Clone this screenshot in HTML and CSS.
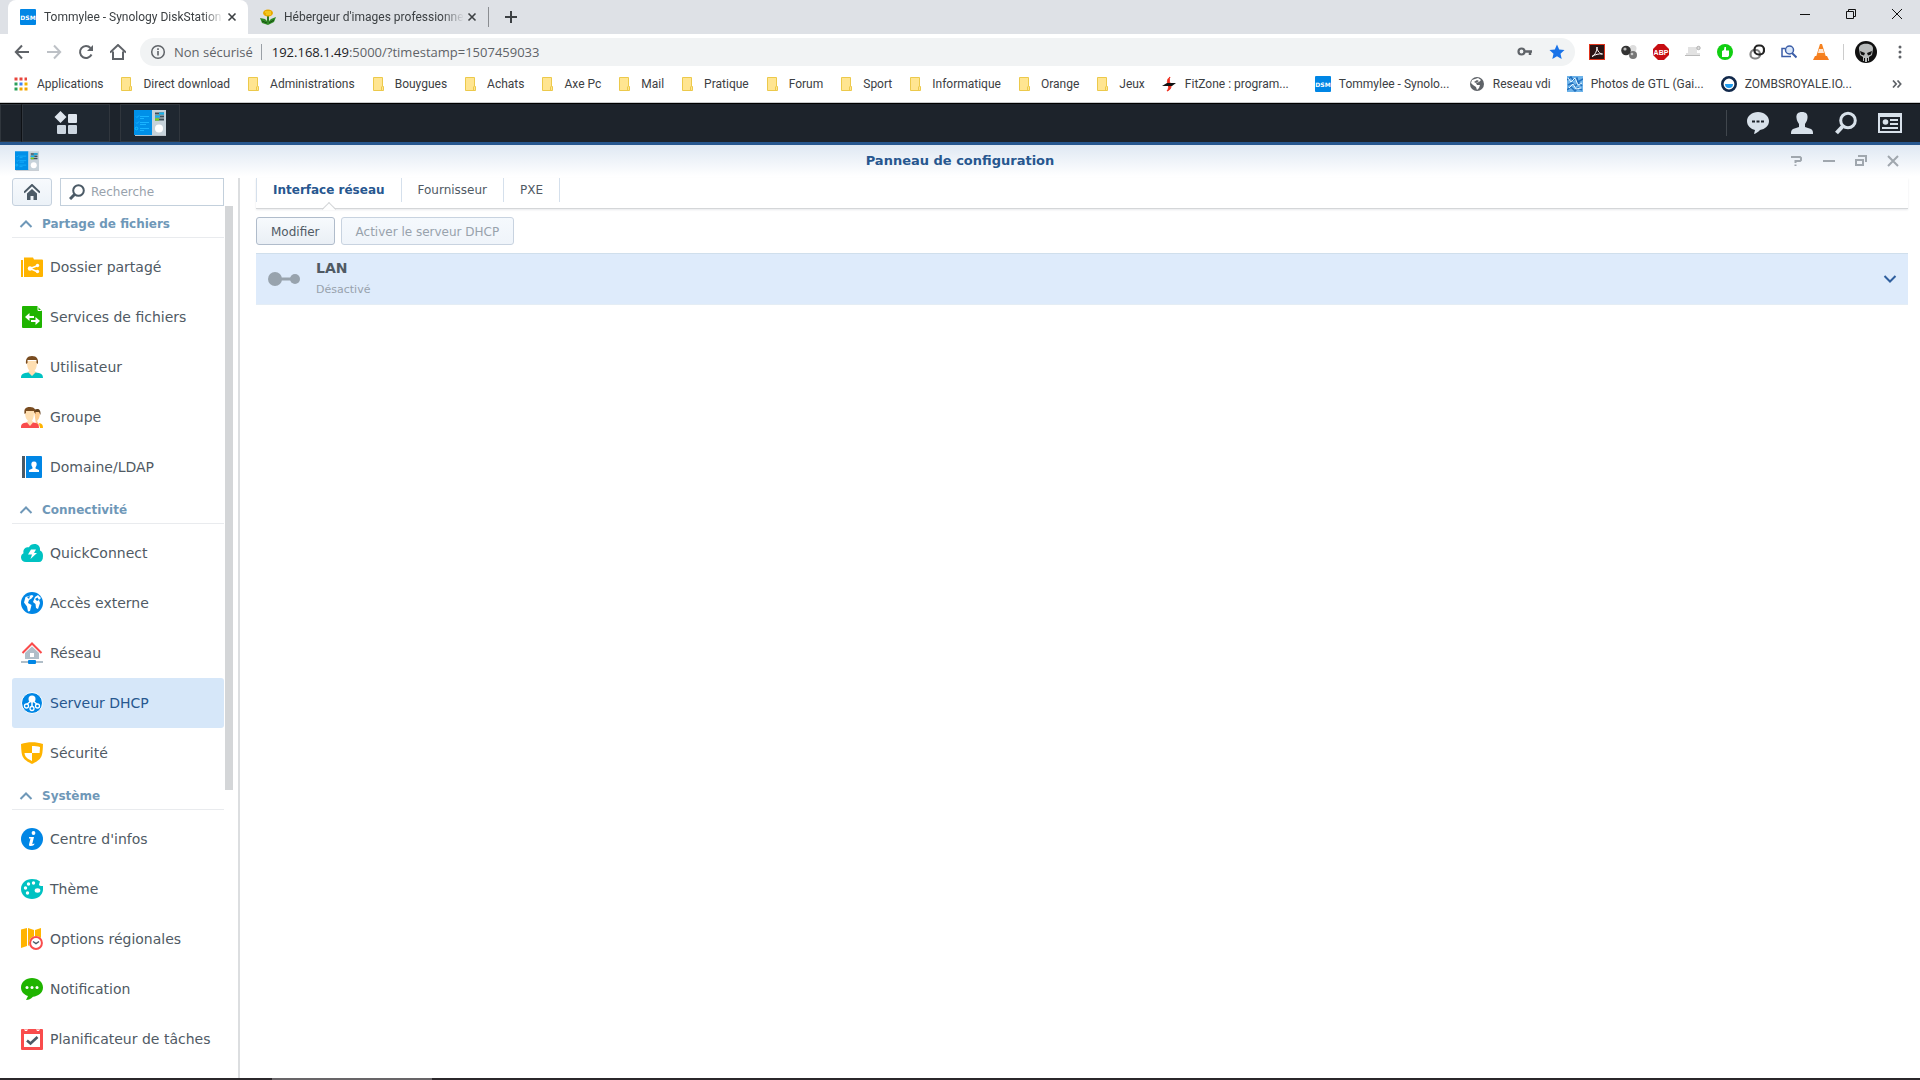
FILE: index.html
```html
<!DOCTYPE html>
<html lang="fr">
<head>
    <meta charset="UTF-8">
    <meta name="viewport" content="width=device-width, initial-scale=1.0">
    <title>Tommylee - Synology DiskStation</title>
    <link rel="stylesheet" href="styles.css">
</head>
<body>
    <!-- shared icons -->
    <svg class="defs" width="0" height="0">
        <symbol id="folder" viewBox="0 0 16 16">
            <path d="M2.500 1.500h9v9h1v4h-10z" fill="#ffe591" stroke="#ecc94b"/>
            <path d="M10.500 14v-3.500" stroke="#ecc94b"/>
        </symbol>
        <symbol id="panel" viewBox="0 0 32 26">
            <rect x="1" y="24" width="31" height="2" fill="#b9c0c6"/>
            <rect width="18" height="25" fill="#0090e8"/>
            <rect x="18" width="14" height="25" fill="#c6d2da"/>
            <path d="M2 6.500l1 1 2-2M6 6.500h9M6 8.500h4M2 12.500l1 1 2-2M6 12.500h9M6 14.500h6M6 18.500h9M6 20.500h4" stroke="#19b4ff" fill="none"/>
            <circle cx="2.500" cy="18.500" r="1.300" fill="none" stroke="#19c0ff"/>
            <path d="M21 3.500h9M21 6.500h9M21 9.500h9" stroke="#40505a" stroke-width="2"/>
            <path d="M25 3.500h5M21 6.500h5" stroke="#13b5f0" stroke-width="2"/>
            <path d="M21 9.500h4" stroke="#73d216" stroke-width="2"/>
            <circle cx="25" cy="18.500" r="4" fill="#fff"/>
        </symbol>
        <symbol id="up" viewBox="0 0 14 10">
            <path d="M1.500 8L7 2.500 12.500 8" fill="none" stroke="#6f98b8" stroke-width="2"/>
        </symbol>
    </svg>

    <header class="browser">
        <div class="tab-strip">
            <div class="browser-tab active">
                <svg width="16" height="16" viewBox="0 0 16 16"><rect width="16" height="16" rx="1" fill="#0086e5"/><text x="8" y="10.500" text-anchor="middle" font-family="DejaVu Sans" font-size="6" font-weight="bold" fill="#fff">DSM</text></svg>
                <span class="tab-title">Tommylee - Synology DiskStation</span>
                <button class="tab-close" aria-label="Fermer l'onglet"><svg width="10" height="10" viewBox="0 0 10 10"><path d="M1.500 1.500l7 7M8.500 1.500l-7 7" stroke="#3c4043" stroke-width="1.600"/></svg></button>
            </div>
            <div class="browser-tab">
                <svg width="16" height="16" viewBox="0 0 16 16"><path d="M8 6v8" stroke="#2d7a22" stroke-width="2"/><path d="M0 9l5 1 3 3 3-3 5-2-2 5-6 3-6-2z" fill="#2f8a25"/><path d="M2 12l5 2M14 11l-5 3" stroke="#174d12"/><ellipse cx="8" cy="4" rx="5" ry="3.500" fill="#e8a800"/><path d="M5 3h6M6 5h5" stroke="#ffe23d"/></svg>
                <span class="tab-title">Hébergeur d'images professionne</span>
                <button class="tab-close" aria-label="Fermer l'onglet"><svg width="10" height="10" viewBox="0 0 10 10"><path d="M1.500 1.500l7 7M8.500 1.500l-7 7" stroke="#3c4043" stroke-width="1.600"/></svg></button>
            </div>
            <button class="new-tab" aria-label="Nouvel onglet"><svg width="12" height="12" viewBox="0 0 12 12"><path d="M6 0v12M0 6h12" stroke="#3c4043" stroke-width="2"/></svg></button>
            <div class="os-buttons">
                <button aria-label="Réduire"><svg width="12" height="12" viewBox="0 0 12 12"><path d="M1 6.500h10" stroke="#111"/></svg></button>
                <button aria-label="Restaurer"><svg width="12" height="12" viewBox="0 0 12 12"><path d="M1.500 3.500h7v7h-7zM3.500 3.500v-2h7v7h-2" fill="none" stroke="#111"/></svg></button>
                <button aria-label="Fermer"><svg width="12" height="12" viewBox="0 0 12 12"><path d="M1 1l10 10M11 1L1 11" stroke="#111"/></svg></button>
            </div>
        </div>

        <div class="toolbar">
            <div class="nav-buttons">
                <button aria-label="Précédent"><svg width="16" height="16" viewBox="0 0 16 16"><path d="M15 8H2M8 1.500L1.800 8 8 14.500" fill="none" stroke="#5f6368" stroke-width="2"/></svg></button>
                <button aria-label="Suivant"><svg width="16" height="16" viewBox="0 0 16 16"><path d="M1 8h13M8 1.500L14.200 8 8 14.500" fill="none" stroke="#bdc1c6" stroke-width="2"/></svg></button>
                <button aria-label="Actualiser"><svg width="16" height="16" viewBox="0 0 16 16"><path d="M13.500 10.500A6 6 0 1 1 12.500 4" fill="none" stroke="#5f6368" stroke-width="2"/><path d="M15 1v6H9z" fill="#5f6368"/></svg></button>
                <button aria-label="Accueil"><svg width="16" height="16" viewBox="0 0 16 16"><path d="M0 8.500L8 1l8 7.500M3 7.500V15h10V7.500" fill="none" stroke="#5f6368" stroke-width="2"/></svg></button>
            </div>
            <div class="omnibox">
                <svg width="16" height="16" viewBox="0 0 16 16"><circle cx="8" cy="8" r="6.300" fill="none" stroke="#5f6368" stroke-width="1.500"/><path d="M8 7v4.500M8 4.300v1.600" stroke="#5f6368" stroke-width="1.600"/></svg>
                <span class="insecure">Non sécurisé</span>
                <span class="url"><b>192.168.1.49</b>:5000/?timestamp=1507459033</span>
                <svg class="key" width="16" height="16" viewBox="0 0 16 16"><circle cx="4.500" cy="7.500" r="3" fill="none" stroke="#5f6368" stroke-width="2.200"/><path d="M7 7.500h8M13 8v3" stroke="#5f6368" stroke-width="2.500"/></svg>
                <svg width="16" height="16" viewBox="0 0 16 16"><path d="M8 .5l2.200 5 5.300.5-4 3.700 1.200 5.300L8 12.200 3.300 15l1.200-5.300L.5 6l5.300-.5z" fill="#1a73e8"/></svg>
            </div>
            <div class="extensions">
                <svg width="16" height="16" viewBox="0 0 16 16"><rect x=".5" y=".5" width="15" height="15" fill="#2a1414" stroke="#e0341c"/><path d="M3 12.500c3-1.500 5-5 5-9.500 0 4 3 7 5.500 7-4-.5-7 .5-10.500 2.500z" fill="none" stroke="#fff"/></svg>
                <svg width="16" height="16" viewBox="0 0 16 16"><circle cx="12" cy="4.500" r="3.500" fill="#ddd"/><circle cx="12" cy="11" r="4" fill="#777"/><circle cx="5" cy="6.500" r="4.800" fill="#333"/><circle cx="4" cy="5" r="1.600" fill="#bbb"/><circle cx="11" cy="10" r="1.300" fill="#ccc"/></svg>
                <svg width="16" height="16" viewBox="0 0 16 16"><path d="M5 0h6l5 5v6l-5 5H5l-5-5V5z" fill="#c70d12"/><text x="8" y="10.500" text-anchor="middle" font-family="Liberation Sans" font-size="7" font-weight="bold" fill="#fff">ABP</text></svg>
                <svg width="16" height="16" viewBox="0 0 16 16"><path d="M3 3h9v6h3v3H1V9h2z" fill="#e2e2e2"/><path d="M0 11.500h15" stroke="#bbb"/><circle cx="13.500" cy="4" r="1.700" fill="#ddd" stroke="#b0b0b0"/></svg>
                <svg width="16" height="16" viewBox="0 0 16 16"><circle cx="8" cy="8" r="8" fill="#11cf12"/><path d="M5 7l2-1 .5-3h1.500v3.500h3v5l-1 1.500H5z" fill="#fff"/></svg>
                <svg width="16" height="16" viewBox="0 0 16 16"><rect x="1.500" y="6" width="9.500" height="8.500" rx="4" fill="none" stroke="#858585" stroke-width="2.200"/><rect x="5.500" y="1.500" width="9.500" height="9" rx="4" fill="none" stroke="#222" stroke-width="2.200"/></svg>
                <svg width="16" height="16" viewBox="0 0 16 16"><path d="M4 4.500H1v8h9" fill="none" stroke="#3c5ea8" stroke-width="1.500"/><circle cx="8.500" cy="6" r="4" fill="#dbe8fa" stroke="#3c5ea8" stroke-width="1.500"/><path d="M11 9l4.500 4.500" stroke="#3c5ea8" stroke-width="2"/></svg>
                <svg width="16" height="16" viewBox="0 0 16 16"><path d="M7 0h2l4 13H3z" fill="#f58220"/><path d="M6 5h4l1 4H5z" fill="#fde8d6"/><path d="M2 12h12l2 4H0z" fill="#f57c1d"/></svg>
            </div>
            <svg class="avatar" width="22" height="22" viewBox="0 0 22 22"><circle cx="11" cy="11" r="11" fill="#111"/><path d="M4 8C3 1 19 1 18 8l-1 6-3 2v4h-1v-3h-1v4h-2v-4H9v3H8v-4l-3-2z" fill="#b9bcbc"/><path d="M5 10l5 2-1 2.500-3-1zM17 10l-5 2 1 2.500 3-1z" fill="#111"/></svg>
            <button class="menu" aria-label="Menu"><svg width="4" height="14" viewBox="0 0 4 14"><circle cx="2" cy="2" r="1.500" fill="#5f6368"/><circle cx="2" cy="7" r="1.500" fill="#5f6368"/><circle cx="2" cy="12" r="1.500" fill="#5f6368"/></svg></button>
        </div>

        <nav class="bookmarks">
            <a href="#"><svg width="16" height="16" viewBox="0 0 16 16"><path d="M1.500 3H14" stroke="#e8453c" stroke-width="3" stroke-dasharray="3 2"/><path d="M1.500 8H5" stroke="#2b9e58" stroke-width="3" stroke-dasharray="3 2"/><path d="M6.500 8H10" stroke="#3f83f8" stroke-width="3" stroke-dasharray="3 2"/><path d="M11.500 8H14.500" stroke="#f2b400" stroke-width="3"/><path d="M1.500 13H5" stroke="#2b9e58" stroke-width="3" stroke-dasharray="3 2"/><path d="M6.500 13H14.500" stroke="#f2a600" stroke-width="3" stroke-dasharray="3 2"/></svg>Applications</a>
            <a href="#"><svg width="16" height="16"><use href="#folder"/></svg>Direct download</a>
            <a href="#"><svg width="16" height="16"><use href="#folder"/></svg>Administrations</a>
            <a href="#"><svg width="16" height="16"><use href="#folder"/></svg>Bouygues</a>
            <a href="#"><svg width="16" height="16"><use href="#folder"/></svg>Achats</a>
            <a href="#"><svg width="16" height="16"><use href="#folder"/></svg>Axe Pc</a>
            <a href="#"><svg width="16" height="16"><use href="#folder"/></svg>Mail</a>
            <a href="#"><svg width="16" height="16"><use href="#folder"/></svg>Pratique</a>
            <a href="#"><svg width="16" height="16"><use href="#folder"/></svg>Forum</a>
            <a href="#"><svg width="16" height="16"><use href="#folder"/></svg>Sport</a>
            <a href="#"><svg width="16" height="16"><use href="#folder"/></svg>Informatique</a>
            <a href="#"><svg width="16" height="16"><use href="#folder"/></svg>Orange</a>
            <a href="#"><svg width="16" height="16"><use href="#folder"/></svg>Jeux</a>
            <a href="#" class="long"><svg width="16" height="16" viewBox="0 0 16 16"><path d="M9 1C6 3 6 6 7 8s1 5-1 7c4-1 5-5 3-8-1-2-1-4 0-6z" fill="#f03020" stroke="#f03020"/><path d="M1 10l5-3h9l-4 3z" fill="#111"/></svg>FitZone : program...</a>
            <a href="#" class="long"><svg width="16" height="16" viewBox="0 0 16 16"><rect width="16" height="16" rx="1" fill="#0086e5"/><text x="8" y="10.500" text-anchor="middle" font-family="DejaVu Sans" font-size="6" font-weight="bold" fill="#fff">DSM</text></svg>Tommylee - Synolo...</a>
            <a href="#"><svg width="16" height="16" viewBox="0 0 16 16"><circle cx="8" cy="8" r="7" fill="#5f6368"/><path d="M9 2l3 2-2 2-3 1 1 2h3l-1 3-2 2-1-3-3-2-2-2 1-3z" fill="#fff"/><path d="M8 4l2 1-3 2-2-1z" fill="#5f6368"/></svg>Reseau vdi</a>
            <a href="#" class="long"><svg width="16" height="16" viewBox="0 0 16 16"><rect width="16" height="16" fill="#6db3ea"/><path d="M0 4l4-3 2 3 4-2 1 4 5-3M1 9l4-2 3 3 4-3 3 3M0 14l4-3 4 4 3-3 4 2" fill="none" stroke="#2270bd" stroke-width="1.500"/><path d="M1 2l3 4 4-4 3 7 4-2M2 12l4-4 3 5 5-1" fill="none" stroke="#e5f6ff"/></svg>Photos de GTL (Gai...</a>
            <a href="#" class="long"><svg width="16" height="16" viewBox="0 0 16 16"><circle cx="8" cy="8" r="6.700" fill="#fff" stroke="#12294b" stroke-width="2.600"/><path d="M4 8h8a4 4 0 0 1-8 0z" fill="#1e9bf0"/></svg>ZOMBSROYALE.IO...</a>
            <button class="more" aria-label="Autres favoris"><svg width="10" height="8" viewBox="0 0 10 8"><path d="M1 .5L4.200 4 1 7.500M5.500.5L8.700 4 5.500 7.500" fill="none" stroke="#5f6368" stroke-width="1.700"/></svg></button>
        </nav>
    </header>

    <!-- DSM taskbar -->
    <div class="taskbar">
        <div class="task-edge"></div>
        <button class="launcher" aria-label="Menu principal"><svg width="24" height="24" viewBox="0 0 24 24"><path d="M6.500 0L12.500 6 6.500 12 .5 6z" fill="#dfe6ee"/><rect x="14" y="3" width="9" height="9" rx="1" fill="#dfe6ee"/><rect x="3" y="14" width="9" height="9" rx="1" fill="#ccd6e0"/><rect x="14" y="14" width="9" height="9" rx="1" fill="#ccd6e0"/></svg></button>
        <button class="task" aria-label="Panneau de configuration"><svg width="32" height="26"><use href="#panel"/></svg></button>
        <div class="tray">
            <button aria-label="Notifications"><svg width="24" height="24" viewBox="0 0 24 24"><path d="M12 1c6 0 11 4 11 9s-4 8-9 9c-2 2-4 3.500-6 4l1-4c-4-1-8-4-8-9s5-9 11-9z" fill="#d8e1ea"/><path d="M6 9.500h3v2H6zM10.500 9.500h3v2h-3zM15 9.500h3v2h-3z" fill="#1d232b"/></svg></button>
            <button aria-label="Options"><svg width="24" height="24" viewBox="0 0 24 24"><path d="M12 1c4 0 6 2 5.500 6-.3 3-1.500 4-2.500 6v3l6 2c2 1 2 3 2 5H1c0-2 0-4 2-5l6-2v-3C8 11 6.800 10 6.500 7 6 3 8 1 12 1z" fill="#d8e1ea"/></svg></button>
            <button aria-label="Rechercher"><svg width="24" height="24" viewBox="0 0 24 24"><circle cx="14" cy="9.500" r="7.300" fill="none" stroke="#d8e1ea" stroke-width="3"/><path d="M8.500 15.500l-6 6.500" stroke="#d8e1ea" stroke-width="4"/></svg></button>
            <button aria-label="Widgets"><svg width="24" height="24" viewBox="0 0 24 24"><path d="M1 4h22v17H1z" fill="none" stroke="#d8e1ea" stroke-width="2"/><path d="M0 2h24v4H0z" fill="#d8e1ea"/><circle cx="7.500" cy="11" r="2.800" fill="#d8e1ea"/><path d="M12 9h8M12 13h8M4 17h16" stroke="#d8e1ea" stroke-width="2"/></svg></button>
        </div>
    </div>

    <main class="window">
        <div class="title-bar">
            <svg width="24" height="20"><use href="#panel"/></svg>
            <h1>Panneau de configuration</h1>
            <div class="window-buttons">
                <button aria-label="Aide"><svg width="12" height="12" viewBox="0 0 12 12"><path d="M0 2h9l1 1v2L9 6H4.500v2" fill="none" stroke="#a0a7ae" stroke-width="2"/><path d="M3.500 9.500h2v1.500h-2z" fill="#a0a7ae"/></svg></button>
                <button aria-label="Réduire"><svg width="12" height="12" viewBox="0 0 12 12"><path d="M0 6h12" stroke="#a0a7ae" stroke-width="2"/></svg></button>
                <button aria-label="Restaurer"><svg width="12" height="12" viewBox="0 0 12 12"><path d="M3 1h8v6M1 5h7v5H1z" fill="none" stroke="#a0a7ae" stroke-width="2"/></svg></button>
                <button aria-label="Fermer"><svg width="12" height="12" viewBox="0 0 12 12"><path d="M1 1l10 10M11 1L1 11" stroke="#a0a7ae" stroke-width="2"/></svg></button>
            </div>
        </div>

        <div class="window-body">
            <aside class="sidebar">
                <div class="sidebar-top">
                    <button class="home" aria-label="Accueil"><svg width="16" height="16" viewBox="0 0 16 16"><path d="M0 8.500L8 1l8 7.500" fill="none" stroke="#4b5a66" stroke-width="2"/><path d="M3 9.500L8 5l5 4.500V16H9.500v-4h-3v4H3z" fill="#4b5a66"/></svg></button>
                    <label class="search">
                        <svg width="16" height="16" viewBox="0 0 16 16"><circle cx="9.500" cy="6.500" r="5.300" fill="none" stroke="#4b5a66" stroke-width="2"/><path d="M5.500 10.500L1 15" stroke="#4b5a66" stroke-width="3"/></svg>
                        <input type="text" placeholder="Recherche" aria-label="Recherche">
                    </label>
                </div>
                <div class="scroll-area">
                    <nav class="menu-list">
                        <h2><svg width="14" height="10"><use href="#up"/></svg>Partage de fichiers</h2>
                        <a href="#"><svg width="22" height="22" viewBox="0 0 22 22"><path d="M0 4h2v17H0zM3 1.500h9l1 2h8a1 1 0 0 1 1 1V20a1 1 0 0 1-1 1H3z" fill="#ffb400"/><path d="M17 9.500L9 12.500l8 3.500" fill="none" stroke="#fff" stroke-width="1.500"/><circle cx="16.500" cy="9.500" r="1.700" fill="#fff"/><circle cx="9" cy="12.500" r="2.200" fill="#fff"/><circle cx="16.500" cy="15.500" r="1.700" fill="#fff"/></svg>Dossier partagé</a>
                        <a href="#"><svg width="22" height="22" viewBox="0 0 22 22"><path d="M2 0h14l5 5v16a1 1 0 0 1-1 1H2a1 1 0 0 1-1-1V1a1 1 0 0 1 1-1z" fill="#1fb400"/><path d="M17 1v3.500h3.500" fill="none" stroke="#fff"/><path d="M4 11l4.500-4v3H13v2H8.500v3zM19 15l-4.500-4v3H10v2h4.500v3z" fill="#fff"/></svg>Services de fichiers</a>
                        <a href="#"><svg width="22" height="22" viewBox="0 0 22 22"><path d="M6 5h10c0 6-1 8-2.500 9.500L16 17l-5 4-5-4 2.500-2.500C7 13 6 11 6 5z" fill="#ffdfb2"/><path d="M5 8C4.500 3 6 0 11 0s6.500 3 6 8l-1.500-1V4h-9v3z" fill="#794c20"/><path d="M0 22c0-4 2-5 7.500-5.500L11 20l3.500-3.500C20 17 22 18 22 22z" fill="#00c2c2"/></svg>Utilisateur</a>
                        <a href="#"><svg width="22" height="22" viewBox="0 0 22 22"><path d="M13 5h6c0 6-1 8-3 10l3 5-4-2z" fill="#ffcd91"/><path d="M13 4c4-2 7-1 6.500 5l-1.500-3h-4z" fill="#62401e"/><path d="M18 17c3 .5 4 2 4 5h-3z" fill="#ffb400"/><path d="M4 5h9c0 6-.8 8-2 9.500l2 3-4 3-4-3 2-3C5 13 4 11 4 5z" fill="#ffdfb2"/><path d="M3.500 8C3 3 4 1 9 1s6 3 5.500 7L13 6V5H5v2z" fill="#794c20"/><path d="M0 22c0-4 1-5 6-5.500L9 20l3-3.500c5 .5 6 1.500 6 5.500z" fill="#f94c4c"/></svg>Groupe</a>
                        <a href="#"><svg width="22" height="22" viewBox="0 0 22 22"><path d="M1 0h3v22H1z" fill="#4b5a66"/><path d="M5 0h15a1 1 0 0 1 1 1v20a1 1 0 0 1-1 1H5z" fill="#0086e5"/><path d="M13 5.500c2.500 0 3 2 2.500 4L14.500 11.500v1l3.500 1.500V16H8v-2l3.500-1.500v-1l-1-2c-.5-2 0-4 2.500-4z" fill="#fff"/></svg>Domaine/LDAP</a>

                        <h2><svg width="14" height="10"><use href="#up"/></svg>Connectivité</h2>
                        <a href="#"><svg width="22" height="22" viewBox="0 0 22 22"><path d="M5 20c-3 0-5-2-5-4.500 0-2 1-3.500 2.500-4.200C2 9 2.500 7.500 4 6.200c1-1 2.500-1.200 4-1C9 3 11 2 13.500 2 17 2 19.500 4.500 19 8.500c2 1 3 2.500 3 5.500 0 4-1.500 6-4 6z" fill="#00c2c2"/><path d="M10 7.500h5l-2 3.500h3l-6.500 6 1.500-4.500H7z" fill="#fff"/></svg>QuickConnect</a>
                        <a href="#"><svg width="22" height="22" viewBox="0 0 22 22"><circle cx="11" cy="11" r="11" fill="#0086e5"/><path d="M4.500 5L11 3l1.500 1-2 2.500L8 8l-1 3 3.500 2-1.500 6-2 .5-1-5-3-4zM14 5l3-2 3 3-2 2 1 3-2 6-2-1-.5-4-2.500-2z" fill="#fff"/><path d="M14 7l2.500-1.500L18 8l-2 1zM6 5l3-1-1 3z" fill="#0086e5"/></svg>Accès externe</a>
                        <a href="#"><svg width="22" height="22" viewBox="0 0 22 22"><path d="M4 11l7-6.500 7 6.500v6H4z" fill="#b0bec8"/><path d="M9 11h4v4H9z" fill="#fff"/><path d="M1.500 11L11 1.500 20.500 11" fill="none" stroke="#fa4b4b" stroke-width="2"/><path d="M0 20h22" stroke="#b0bec8" stroke-width="2"/><rect x="7" y="18" width="8" height="4" rx="1" fill="#0086e5"/></svg>Réseau</a>
                        <a href="#" class="selected"><svg width="22" height="22" viewBox="0 0 22 22"><circle cx="11" cy="11" r="10.500" fill="#0086e5" stroke="#fff"/><circle cx="11" cy="7" r="3.500" fill="#fff"/><path d="M10 9l-5 4M11 9v6M12 9l5 4" stroke="#fff" stroke-width="1.500"/><circle cx="5.500" cy="14" r="2" fill="#0086e5" stroke="#fff" stroke-width="1.300"/><circle cx="11" cy="16.500" r="2" fill="#0086e5" stroke="#fff" stroke-width="1.300"/><circle cx="16.500" cy="14" r="2" fill="#0086e5" stroke="#fff" stroke-width="1.300"/></svg>Serveur DHCP</a>
                        <a href="#"><svg width="22" height="22" viewBox="0 0 22 22"><path d="M0 2c7-2.500 15-2.500 22 0-.5 13-1 15-11 20C1 17 .5 15 0 2z" fill="#ffb400"/><path d="M11 4c3 0 5.500.3 8 1l-.4 6H11zM3.500 11H11v8c-5-2.500-7-4-7.500-8z" fill="#fff"/></svg>Sécurité</a>

                        <h2><svg width="14" height="10"><use href="#up"/></svg>Système</h2>
                        <a href="#"><svg width="22" height="22" viewBox="0 0 22 22"><circle cx="11" cy="11" r="11" fill="#0086e5"/><circle cx="12.500" cy="5" r="1.900" fill="#fff"/><path d="M8 9h5l-1.800 7.200 2.300-.7-.5 1.500c-2 1.500-5.500 1.500-5-.5l1.500-6H8z" fill="#fff"/></svg>Centre d'infos</a>
                        <a href="#"><svg width="22" height="22" viewBox="0 0 22 22"><path d="M11 1c3.500 0 6 .8 8 2.500l-1 3c0 1 1 1.500 4 1.500v4c-.5 5-5 9-11 9S0 17 0 11 5 1 11 1z" fill="#00c2c2"/><circle cx="4.500" cy="10" r="1.700" fill="#fff"/><circle cx="7.500" cy="6" r="1.700" fill="#fff"/><circle cx="12.500" cy="5" r="1.700" fill="#fff"/><circle cx="6.500" cy="15" r="1.700" fill="#fff"/><ellipse cx="16.500" cy="12.500" rx="2.800" ry="2.200" fill="#fff"/></svg>Thème</a>
                        <a href="#"><svg width="22" height="22" viewBox="0 0 22 22"><path d="M0 1.500L6 0v18l-6 2zM7 0l6 2v16l-6-.5zM14 2l6-2v12h-6z" fill="#ffb400"/><circle cx="15" cy="15" r="7" fill="#fff"/><circle cx="15" cy="15" r="5.900" fill="#fff" stroke="#f94c4c" stroke-width="2"/><path d="M12 13.500l3 2 3-2" fill="none" stroke="#4b5a66" stroke-width="1.500"/></svg>Options régionales</a>
                        <a href="#"><svg width="22" height="22" viewBox="0 0 22 22"><path d="M11 0c6 0 11 4 11 9.500S17 18 12 18.800C9.500 21 8 22 5 22l2-4c-4-1.500-7-4-7-8.500C0 4 5 0 11 0z" fill="#1fb400"/><circle cx="6" cy="9.500" r="1.500" fill="#fff"/><circle cx="11" cy="9.500" r="1.500" fill="#fff"/><circle cx="16" cy="9.500" r="1.500" fill="#fff"/></svg>Notification</a>
                        <a href="#"><svg width="22" height="22" viewBox="0 0 22 22"><path d="M1 1h20a1 1 0 0 1 1 1v19a1 1 0 0 1-1 1H1a1 1 0 0 1-1-1V2a1 1 0 0 1 1-1z" fill="#f94c4c"/><path d="M3 6h16v13H3z" fill="#fff"/><path d="M4 0v2.500h2V0M16 0v2.500h2V0" fill="none" stroke="#fff"/><path d="M6 12.500l3.500 3L16.500 9" fill="none" stroke="#4b5a66" stroke-width="2.600"/></svg>Planificateur de tâches</a>
                    </nav>
                    <div class="scrollbar"></div>
                </div>
            </aside>

            <section class="content">
                <nav class="tabs">
                    <a href="#" class="current">Interface réseau</a>
                    <a href="#">Fournisseur</a>
                    <a href="#">PXE</a>
                </nav>
                <div class="actions">
                    <button class="btn">Modifier</button>
                    <button class="btn" disabled>Activer le serveur DHCP</button>
                </div>
                <div class="interface">
                    <svg width="32" height="14" viewBox="0 0 32 14"><path d="M7 7h20" stroke="#98a3ad" stroke-width="3"/><circle cx="7" cy="7" r="7" fill="#98a3ad"/><circle cx="27" cy="7" r="5" fill="#98a3ad"/></svg>
                    <div class="interface-text">
                        <h3>LAN</h3>
                        <p>Désactivé</p>
                    </div>
                    <button class="expand" aria-label="Développer"><svg width="14" height="10" viewBox="0 0 14 10"><path d="M1.500 2L7 7.500 12.500 2" fill="none" stroke="#2f5f9e" stroke-width="2"/></svg></button>
                </div>
            </section>
        </div>
    </main>
    <footer class="os-bar"><div class="os-task"></div></footer>
</body>
</html>
```

FILE: styles.css
```css
* {
    box-sizing: border-box;
}
body {
    margin: 0;
    height: 100vh;
    display: flex;
    flex-direction: column;
    overflow: hidden;
    background-color: #fff;
    color: #505a64;
    font-family: Verdana, "DejaVu Sans", sans-serif;
    font-size: 12px;
}
button {
    display: flex;
    align-items: center;
    justify-content: center;
    margin: 0;
    padding: 0;
    border: none;
    background: none;
    font-family: inherit;
    cursor: pointer;
}
a {
    color: inherit;
    text-decoration: none;
}
h1, h2, h3, p {
    margin: 0;
}
svg {
    display: block;
    flex-shrink: 0;
}
.defs {
    position: absolute;
}

/* Browser */
.browser {
    flex-shrink: 0;
    border-bottom: 1px solid #c8cacc;
    color: #3c4043;
    font-family: Roboto, sans-serif;
}
.tab-strip {
    display: flex;
    height: 34px;
    padding-left: 8px;
    background-color: #dee1e6;
}
.browser-tab {
    display: flex;
    align-items: center;
    width: 240px;
    padding: 0 10px 0 12px;
}
.browser-tab.active {
    border-radius: 8px 8px 0 0;
    background-color: #fff;
}
.tab-title {
    flex: 1;
    margin: 0 2px 0 8px;
    overflow: hidden;
    white-space: nowrap;
    -webkit-mask-image: linear-gradient(to right, #000 88%, transparent);
    mask-image: linear-gradient(to right, #000 88%, transparent);
}
.tab-close {
    width: 12px;
    height: 16px;
}
.new-tab {
    align-self: center;
    width: 44px;
    height: 20px;
    border-left: 1px solid #8a8d91;
}
.os-buttons {
    display: flex;
    align-items: center;
    margin-left: auto;
    height: 28px;
}
.os-buttons button {
    width: 46px;
    height: 28px;
}
.toolbar {
    display: flex;
    align-items: center;
    height: 36px;
    padding-right: 16px;
}
.nav-buttons {
    display: flex;
    gap: 16px;
    padding: 0 14px;
}
.omnibox {
    display: flex;
    flex: 1;
    align-items: center;
    height: 28px;
    padding: 0 10px;
    border-radius: 14px;
    background-color: #f1f3f4;
    color: #5f6368;
    font-family: "Open Sans", sans-serif;
    font-size: 13px;
}
.insecure {
    margin-left: 8px;
    padding-right: 8px;
    border-right: 1px solid #9aa0a6;
    line-height: 16px;
}
.url {
    flex: 1;
    margin-left: 10px;
}
.url b {
    color: #202124;
    font-weight: normal;
}
.key {
    margin-right: 16px;
}
.extensions {
    display: flex;
    gap: 16px;
    padding: 0 14px;
    border-right: 1px solid #ccc;
}
.avatar {
    margin: 0 19px 0 11px;
}
.menu {
    width: 8px;
    height: 16px;
}
.bookmarks {
    display: flex;
    align-items: center;
    gap: 16px;
    height: 32px;
    padding: 0 18px 4px 13px;
    white-space: nowrap;
}
.bookmarks a {
    display: flex;
    align-items: center;
    gap: 8px;
}
.bookmarks .long {
    width: 138px;
}
.more {
    margin-left: auto;
}

/* Taskbar */
.taskbar {
    display: flex;
    flex-shrink: 0;
    height: 42px;
    border-top: 1px solid #000;
    border-bottom: 3px solid #27578f;
    background-color: #1d232b;
}
.task-edge {
    width: 22px;
    border: 1px solid #30363d;
    border-right-color: #0d1014;
}
.launcher {
    width: 88px;
    border: 1px solid #30363d;
    background-color: #1f2730;
}
.task {
    width: 60px;
    margin-left: 10px;
    border: 1px solid #30363d;
    background-color: #1f2730;
}
.tray {
    display: flex;
    align-items: center;
    gap: 20px;
    margin: 6px 18px 6px auto;
    padding-left: 19px;
    border-left: 1px solid #40464d;
}

/* Control panel window */
.window {
    display: flex;
    flex: 1;
    flex-direction: column;
    min-height: 0;
}
.title-bar {
    display: grid;
    grid-template-columns: 1fr auto 1fr;
    align-items: center;
    flex-shrink: 0;
    height: 33px;
    padding: 0 15px 2px;
    background: linear-gradient(#dfe8f3, #fff 95%);
}
.title-bar h1 {
    color: #27578f;
    font-size: 13px;
}
.window-buttons {
    display: flex;
    justify-content: flex-end;
    gap: 20px;
    padding-right: 6px;
}
.window-body {
    display: flex;
    flex: 1;
    min-height: 0;
}
.sidebar {
    display: flex;
    flex-direction: column;
    width: 240px;
    padding-left: 12px;
    border-right: 2px solid #dcdee0;
}
.sidebar-top {
    display: flex;
    gap: 8px;
    padding-right: 14px;
}
.home {
    width: 40px;
    height: 28px;
    border: 1px solid #c5d1de;
    border-radius: 3px;
    background: linear-gradient(#f7fafd, #ecf2f8);
}
.search {
    display: flex;
    flex: 1;
    align-items: center;
    gap: 6px;
    height: 28px;
    padding-left: 8px;
    border: 1px solid #c3d0dc;
}
.search input {
    width: 100%;
    padding: 0;
    border: none;
    outline: none;
    background: none;
    color: #505a64;
    font-family: inherit;
    font-size: 12px;
}
.search input::placeholder {
    color: #98a2ac;
}
.scroll-area {
    display: flex;
    flex: 1;
    justify-content: space-between;
    min-height: 0;
    padding-right: 5px;
}
.menu-list {
    width: 212px;
    overflow: hidden;
}
.menu-list h2 {
    display: flex;
    align-items: center;
    gap: 9px;
    height: 32px;
    margin-bottom: 4px;
    padding: 4px 0 0 7px;
    border-bottom: 1px solid #e9ebee;
    color: #6f98b8;
    font-size: 12px;
}
.menu-list a {
    display: flex;
    align-items: center;
    gap: 7px;
    height: 50px;
    padding-left: 9px;
    border-radius: 3px;
    font-size: 14px;
    white-space: nowrap;
}
.menu-list a.selected {
    background-color: #d6e7f9;
    color: #27578f;
}
.scrollbar {
    width: 8px;
    height: 67%;
    background-color: #d4d6d8;
}

.content {
    flex: 1;
    padding: 0 12px 0 16px;
}
.tabs {
    display: flex;
    height: 31px;
    border-bottom: 1px solid #d4d6d8;
    box-shadow: 0 1px 2px #e8eaec;
}
.tabs a {
    position: relative;
    height: 24px;
    padding: 0 16px;
    border-right: 1px solid #d5e0ec;
    line-height: 25px;
}
.tabs .current {
    border-left: 1px solid #d5e0ec;
    color: #27578f;
    font-weight: bold;
}
/* small notch under the current tab */
.tabs .current::after {
    content: "";
    position: absolute;
    left: 50%;
    bottom: -12px;
    width: 9px;
    height: 9px;
    margin-left: -5px;
    border-top: 1px solid #d4d6d8;
    border-left: 1px solid #d4d6d8;
    background: linear-gradient(135deg, #fff 50%, transparent 50%);
    transform: rotate(45deg);
}
.actions {
    display: flex;
    gap: 6px;
    padding: 8px 0;
}
.btn {
    height: 28px;
    padding: 1px 14px 0;
    border: 1px solid #b0bccb;
    border-radius: 3px;
    background: linear-gradient(#f7fafd, #eaeff5);
    color: #505a64;
    font-size: 12px;
}
.btn:disabled {
    border-color: #c8d3e0;
    background: linear-gradient(#f5f9fd, #eff4fa);
    color: #98a2ac;
    cursor: default;
}
.interface {
    display: flex;
    align-items: center;
    height: 52px;
    padding: 0 11px 0 12px;
    border-top: 1px solid #d0dfec;
    border-bottom: 1px solid #e4edf5;
    background-color: #deebfb;
}
.interface-text {
    flex: 1;
    margin-left: 16px;
}
.interface h3 {
    margin-bottom: 4px;
    font-size: 14px;
    line-height: 18px;
}
.interface p {
    color: #98a2ac;
    font-size: 11px;
    line-height: 18px;
}

.os-bar {
    flex-shrink: 0;
    height: 2px;
    padding-left: 272px;
    background-color: #2b282b;
}
.os-task {
    width: 160px;
    height: 2px;
    background-color: #686568;
}
```
